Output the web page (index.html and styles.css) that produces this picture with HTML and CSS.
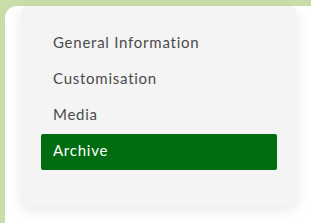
FILE: index.html
```html
<!DOCTYPE html>
<html>
<head>
<meta charset="utf-8">
<link rel="stylesheet" href="styles.css">
</head>
<body>
<div class="panel">
    <ul class="side-menu">
        <li class="menu-item">General Information</li>
        <li class="menu-item">Customisation</li>
        <li class="menu-item">Media</li>
        <li class="menu-item active">Archive</li>
    </ul>
</div>
</body>
</html>
```
FILE: styles.css
```css
*{padding:0;margin:0;box-sizing:border-box;}
li{list-style:none;}
html,body{height:100%;}
body{
    background:#c9dda8;
    padding:6px 0 0 5px;
    font-family:"Lato","Liberation Sans",sans-serif;
    overflow:hidden;
}
.panel{
    background:#fff;
    height:100%;
    border-top-left-radius:12px;
    padding-left:16px;
}
.side-menu{
    width:276px;
    background:#f4f4f4;
    border-radius:8px;
    box-shadow:0 4px 14px rgba(0,0,0,0.09);
    padding:20px 20px 36px;
}
.menu-item{
    height:36px;
    line-height:32px;
    padding:0 0 4px 12px;
    font-size:15px;
    color:#4b4b4b;
    border-radius:2px;
    letter-spacing:0.75px;
}
.menu-item.active{
    background:#026c10;
    color:#fff;
}
```
